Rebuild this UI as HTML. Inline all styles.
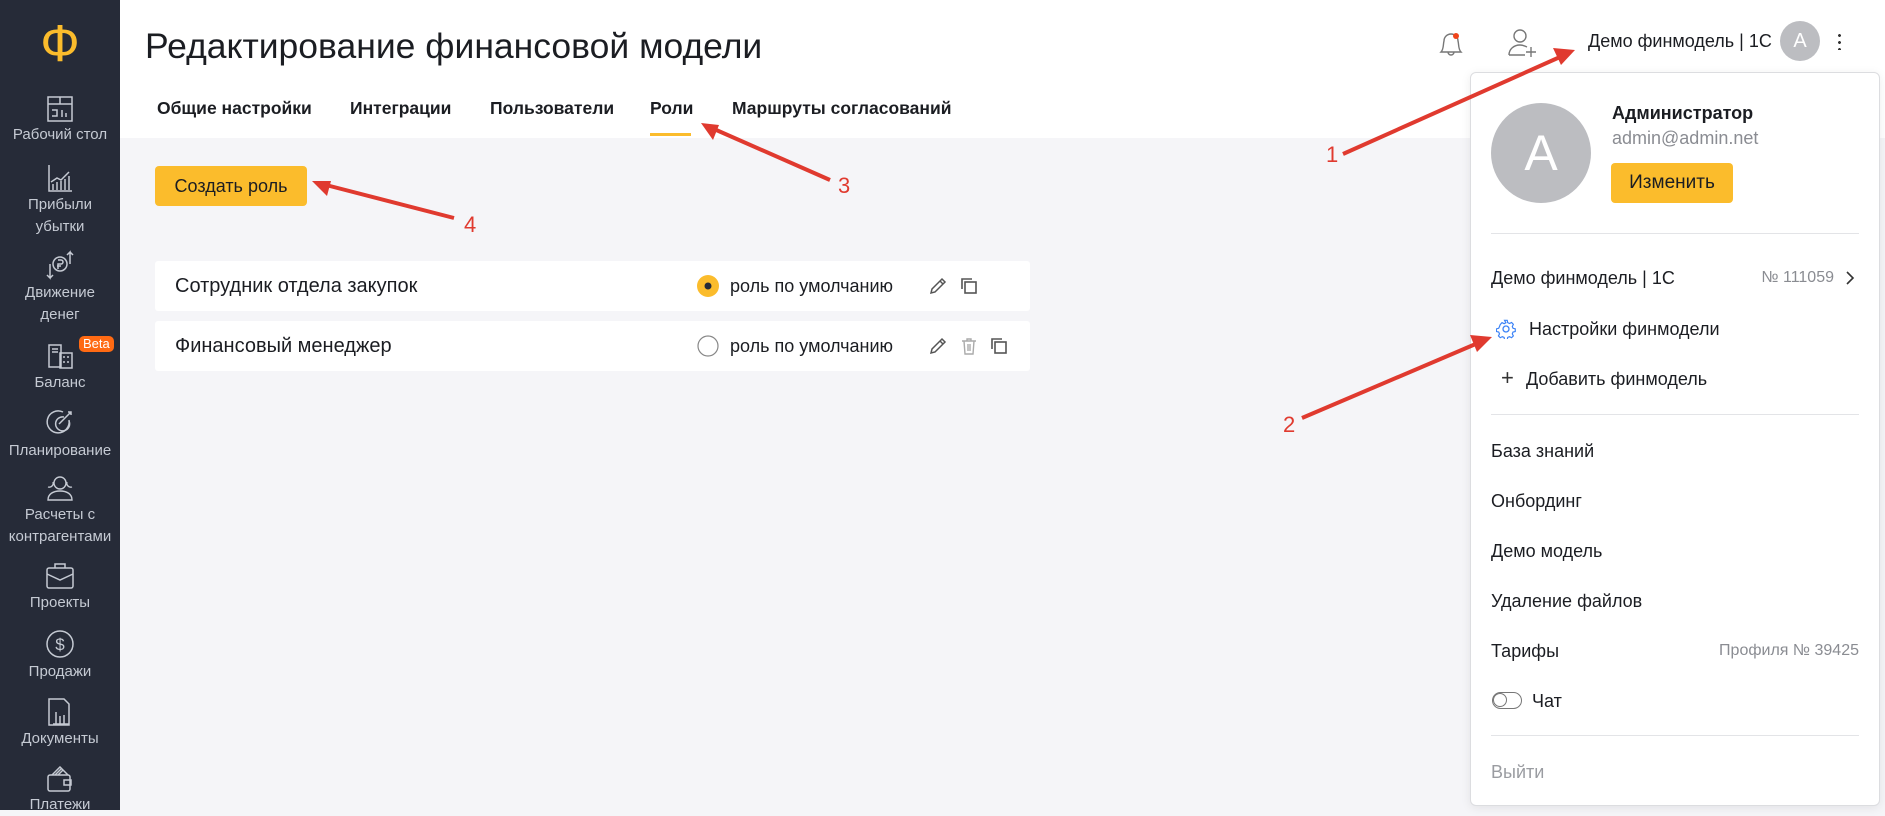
<!DOCTYPE html>
<html><head><meta charset="utf-8"><style>
*{margin:0;padding:0;box-sizing:border-box}
body{width:1885px;height:810px;overflow:hidden;font-family:"Liberation Sans","DejaVu Sans",sans-serif;background:#f5f5f8;position:relative;color:#1b1d22}
.side{position:absolute;left:0;top:0;width:120px;height:810px;background:#262b38}
.logo{position:absolute;left:0;width:120px;top:14px;text-align:center;color:#fbbc2c;font-size:52px;line-height:60px}
.si{position:absolute;left:0;width:120px;text-align:center;color:#c5cad3;font-size:15px;line-height:22px}
.si svg{display:block;margin:0 auto 2px}
.header{position:absolute;left:120px;top:0;right:0;height:138px;background:#fff}
.title{position:absolute;left:145px;top:21px;font-size:35.5px;line-height:50px;color:#1b1d22}
.tab{position:absolute;top:96px;font-size:17.5px;font-weight:bold;line-height:24px;color:#1b1d22}
.ul{position:absolute;left:650px;top:133px;width:41px;height:3px;background:#fbbc2c}
.btn{position:absolute;background:#fbbc2c;border-radius:4px;color:#1b1d22;text-align:center}
.row{position:absolute;left:155px;width:875px;height:50px;background:#fff;border-radius:3px}
.row .n{position:absolute;left:20px;top:13px;font-size:20px;line-height:24px}
.row .d{position:absolute;left:575px;top:13px;font-size:18px;line-height:24px}
.row svg{position:absolute}
.dd{position:absolute;left:1470px;top:72px;width:410px;height:734px;background:#fff;border:1px solid #dcdde0;border-radius:6px;box-shadow:0 2px 10px rgba(0,0,0,.08)}
.it{position:absolute;left:20px;font-size:18px;line-height:24px;color:#1b1d22}
.hr{position:absolute;left:20px;right:20px;height:1px;background:#e3e4e7}
.num{position:absolute;color:#e03a2f;font-size:22px;line-height:24px}
</style></head><body>
<div class="side">
<div class="logo">Ф</div>
<div class="si" style="top:96px"><svg width="26" height="26" viewBox="0 0 26 26" fill="none" stroke="#c5cad3" stroke-width="1.5"><rect x="1" y="1" width="24" height="24"/><path d="M1 8H25M13 1V8M5 14h5v6H5M15 14v7M19 17v4"/></svg>Рабочий стол</div>
<div class="si" style="top:164px"><svg width="26" height="28" viewBox="0 0 26 28" fill="none" stroke="#c5cad3" stroke-width="1.5"><path d="M2 1V27H25M6 26v-6M10 26v-8M14 26v-9M18 26v-11M22 26v-14M4 18l6-4 4 2 8-8"/></svg>Прибыли<br>убытки</div>
<div class="si" style="top:250px"><svg width="32" height="30" viewBox="0 0 32 30" fill="none" stroke="#c5cad3" stroke-width="1.5"><circle cx="16" cy="14" r="7"/><path d="M14 10h3a2 2 0 010 4h-3v5M13 16h4M26 14V2l-3 3M26 2l3 3M6 14v14l-3-3M6 28l3-3"/></svg>Движение<br>денег</div>
<div class="si" style="top:342px"><svg width="30" height="28" viewBox="0 0 30 28" fill="none" stroke="#c5cad3" stroke-width="1.5"><path d="M4 3h12v22H4zM7 7h6M7 10h6"/><rect x="15" y="11" width="12" height="15"/><path d="M18 15h2M22 15h2M18 20h2M22 20h2"/></svg>Баланс</div>
<div style="position:absolute;left:79px;top:336px;background:#ff6a13;color:#fff;font-size:13px;line-height:16px;padding:0 4px;border-radius:5px">Beta</div>
<div class="si" style="top:408px"><svg width="30" height="30" viewBox="0 0 30 30" fill="none" stroke="#c5cad3" stroke-width="1.5"><path d="M24 12A11 11 0 1118 4"/><path d="M19 9a7 7 0 105 4"/><path d="M14 16L26 4M23 4h3v3"/></svg>Планирование</div>
<div class="si" style="top:474px"><svg width="30" height="28" viewBox="0 0 30 28" fill="none" stroke="#c5cad3" stroke-width="1.4"><circle cx="15" cy="9" r="6"/><path d="M3 26c0-6 5-9 12-9s12 3 12 9zM8 8a4 4 0 01-5 5M22 8a4 4 0 005 5"/></svg>Расчеты с<br>контрагентами</div>
<div class="si" style="top:562px"><svg width="30" height="28" viewBox="0 0 30 28" fill="none" stroke="#c5cad3" stroke-width="1.5"><rect x="2" y="6" width="26" height="20" rx="2"/><path d="M10 6V2h10v4M2 12l13 6 13-6"/></svg>Проекты</div>
<div class="si" style="top:629px"><svg width="30" height="30" viewBox="0 0 30 30" fill="none" stroke="#c5cad3" stroke-width="1.5"><circle cx="15" cy="15" r="13"/><text x="15" y="21" font-size="17" fill="#c5cad3" stroke="none" text-anchor="middle" font-family="Liberation Sans">$</text></svg>Продажи</div>
<div class="si" style="top:698px"><svg width="26" height="28" viewBox="0 0 26 28" fill="none" stroke="#c5cad3" stroke-width="1.5"><path d="M2 1h15l5 5v21H2zM9 26V14M13 26V18M17 26v-9M6 26h16"/></svg>Документы</div>
<div class="si" style="top:766px"><svg width="28" height="26" viewBox="0 0 28 26" fill="none" stroke="#c5cad3" stroke-width="1.5"><rect x="2" y="9" width="22" height="16" rx="2"/><path d="M6 9l8-8 8 8M9 9l6-6M12 9l5-5M18 14h7v5h-7z"/></svg>Платежи</div>
</div>
<div class="header"></div>
<div class="title">Редактирование финансовой модели</div>
<div class="tab" style="left:157px">Общие настройки</div>
<div class="tab" style="left:350px">Интеграции</div>
<div class="tab" style="left:490px">Пользователи</div>
<div class="tab" style="left:650px">Роли</div>
<div class="tab" style="left:732px">Маршруты согласований</div>
<div class="ul"></div>
<div class="btn" style="left:155px;top:166px;width:152px;height:40px;font-size:18px;line-height:40px">Создать роль</div>

<div class="row" style="top:261px"><div class="n">Сотрудник отдела закупок</div>
<svg style="left:542px;top:14px" width="22" height="22"><circle cx="11" cy="11" r="11" fill="#fbbc2c"/><circle cx="11" cy="11" r="3.5" fill="#262b38"/></svg>
<div class="d">роль по умолчанию</div>
<svg style="left:774px;top:16px" width="18" height="18" viewBox="0 0 18 18" fill="none" stroke="#555" stroke-width="1.5"><path d="M2 16l1-4L13 2l3 3L6 15zM11 4l3 3"/></svg>
<svg style="left:805px;top:16px" width="18" height="18" viewBox="0 0 18 18" fill="none" stroke="#555" stroke-width="1.6"><path d="M2 12V2h10"/><rect x="5" y="5" width="11" height="11"/></svg>
</div>
<div class="row" style="top:321px"><div class="n">Финансовый менеджер</div>
<svg style="left:542px;top:14px" width="22" height="22"><circle cx="11" cy="11" r="10" fill="none" stroke="#888" stroke-width="1.2"/></svg>
<div class="d">роль по умолчанию</div>
<svg style="left:774px;top:16px" width="18" height="18" viewBox="0 0 18 18" fill="none" stroke="#555" stroke-width="1.5"><path d="M2 16l1-4L13 2l3 3L6 15zM11 4l3 3"/></svg>
<svg style="left:805px;top:16px" width="18" height="18" viewBox="0 0 18 18" fill="none" stroke="#aaa" stroke-width="1.4"><path d="M2 4h14M7 4V2h4v2M4 4l1 13h8l1-13M8 7v7M10 7v7"/></svg>
<svg style="left:835px;top:16px" width="18" height="18" viewBox="0 0 18 18" fill="none" stroke="#555" stroke-width="1.6"><path d="M2 12V2h10"/><rect x="5" y="5" width="11" height="11"/></svg>
</div>

<svg style="position:absolute;left:1437px;top:30px" width="28" height="30" viewBox="0 0 28 30" fill="none" stroke="#777" stroke-width="1.4"><path d="M4 22c3-3 2-8 3-11a7 7 0 0114 0c1 3 0 8 3 11zM11 22a3 3 0 006 0"/><circle cx="19" cy="6" r="3" fill="#f0441a" stroke="none"/></svg>
<svg style="position:absolute;left:1507px;top:28px" width="32" height="30" viewBox="0 0 32 30" fill="none" stroke="#777" stroke-width="1.4"><circle cx="13" cy="8" r="6"/><path d="M2 27c0-6 5-10 11-10 3 0 5 1 7 2M2 27h16M24 19v10M19 24h10"/></svg>
<div style="position:absolute;left:1588px;top:29px;font-size:18px;line-height:24px">Демо финмодель | 1С</div>
<div style="position:absolute;left:1780px;top:21px;width:40px;height:40px;border-radius:50%;background:#bcbdc1;color:#fff;font-size:20px;line-height:40px;text-align:center">A</div>
<div style="position:absolute;left:1838px;top:32px;width:3px;height:18px;background:radial-gradient(circle,#333 1.3px,transparent 1.6px) 0 0/3px 7px"></div>

<div class="dd">
<div style="position:absolute;left:20px;top:30px;width:100px;height:100px;border-radius:50%;background:#bcbdc1;color:#fff;font-size:50px;line-height:100px;text-align:center">A</div>
<div style="position:absolute;left:141px;top:28px;font-size:18px;font-weight:bold;line-height:24px">Администратор</div>
<div style="position:absolute;left:141px;top:53px;font-size:18px;line-height:24px;color:#8a8c92">admin@admin.net</div>
<div class="btn" style="left:140px;top:90px;width:122px;height:40px;font-size:19px;line-height:40px">Изменить</div>
<div class="hr" style="top:160px"></div>
<div class="it" style="top:193px">Демо финмодель | 1С</div>
<div style="position:absolute;right:45px;top:195px;font-size:16px;line-height:20px;color:#8a8c92">№ 111059</div>
<svg style="position:absolute;right:24px;top:197px" width="10" height="16" viewBox="0 0 10 16" fill="none" stroke="#333" stroke-width="1.6"><path d="M2 2l6 6-6 6"/></svg>
<svg style="position:absolute;left:25px;top:246px" width="20" height="20" viewBox="0 0 20 20" fill="none" stroke="#3b82f6" stroke-width="1.3"><circle cx="10" cy="10" r="3"/><path d="M8.5 1.5h3l.5 2.5 2 1 2.3-1.2 2 2.2-1.2 2.3.8 2 2.5.6v3l-2.5.6-.8 2 1.2 2.3-2 2-2.3-1.2-2 .9-.5 2.5h-3l-.5-2.5-2-.9-2.3 1.2-2-2 1.2-2.3-.9-2-2.5-.6v-3l2.5-.6.9-2L3.7 6.2l2-2.2L8 5.2l2-1z" transform="scale(.9) translate(1 0)"/></svg>
<div class="it" style="top:244px;left:58px">Настройки финмодели</div>
<div class="it" style="top:293px;left:30px;font-size:22px;color:#333">+</div>
<div class="it" style="top:294px;left:55px">Добавить финмодель</div>
<div class="hr" style="top:341px"></div>
<div class="it" style="top:366px">База знаний</div>
<div class="it" style="top:416px">Онбординг</div>
<div class="it" style="top:466px">Демо модель</div>
<div class="it" style="top:516px">Удаление файлов</div>
<div class="it" style="top:566px">Тарифы</div>
<div style="position:absolute;right:20px;top:568px;font-size:16px;line-height:20px;color:#8a8c92">Профиля № 39425</div>
<div style="position:absolute;left:21px;top:619px;width:30px;height:17px;border:1.5px solid #777;border-radius:9px"><div style="position:absolute;left:0;top:0;width:14px;height:14px;border-radius:50%;border:1.5px solid #777;background:#fff"></div></div>
<div class="it" style="top:616px;left:61px">Чат</div>
<div class="hr" style="top:662px"></div>
<div class="it" style="top:687px;color:#9a9ca1">Выйти</div>
</div>

<svg style="position:absolute;left:0;top:0" width="1885" height="810">
<g stroke="#e03a2f" stroke-width="4" fill="none">
<path d="M1343 154L1560 57"/><path d="M1302 418L1478 343"/><path d="M830 180L714 129"/><path d="M454 218L326 185"/>
</g>
<g fill="#e03a2f">
<path d="M1575 50l-22 -2 8 17z"/><path d="M1492 337l-22 -2 7 17z"/><path d="M701 123l12 17 6-15z"/><path d="M312 181l15 15 4-15z"/>
</g>
</svg>
<div class="num" style="left:1326px;top:143px">1</div>
<div class="num" style="left:1283px;top:413px">2</div>
<div class="num" style="left:838px;top:174px">3</div>
<div class="num" style="left:464px;top:213px">4</div>
</body></html>
